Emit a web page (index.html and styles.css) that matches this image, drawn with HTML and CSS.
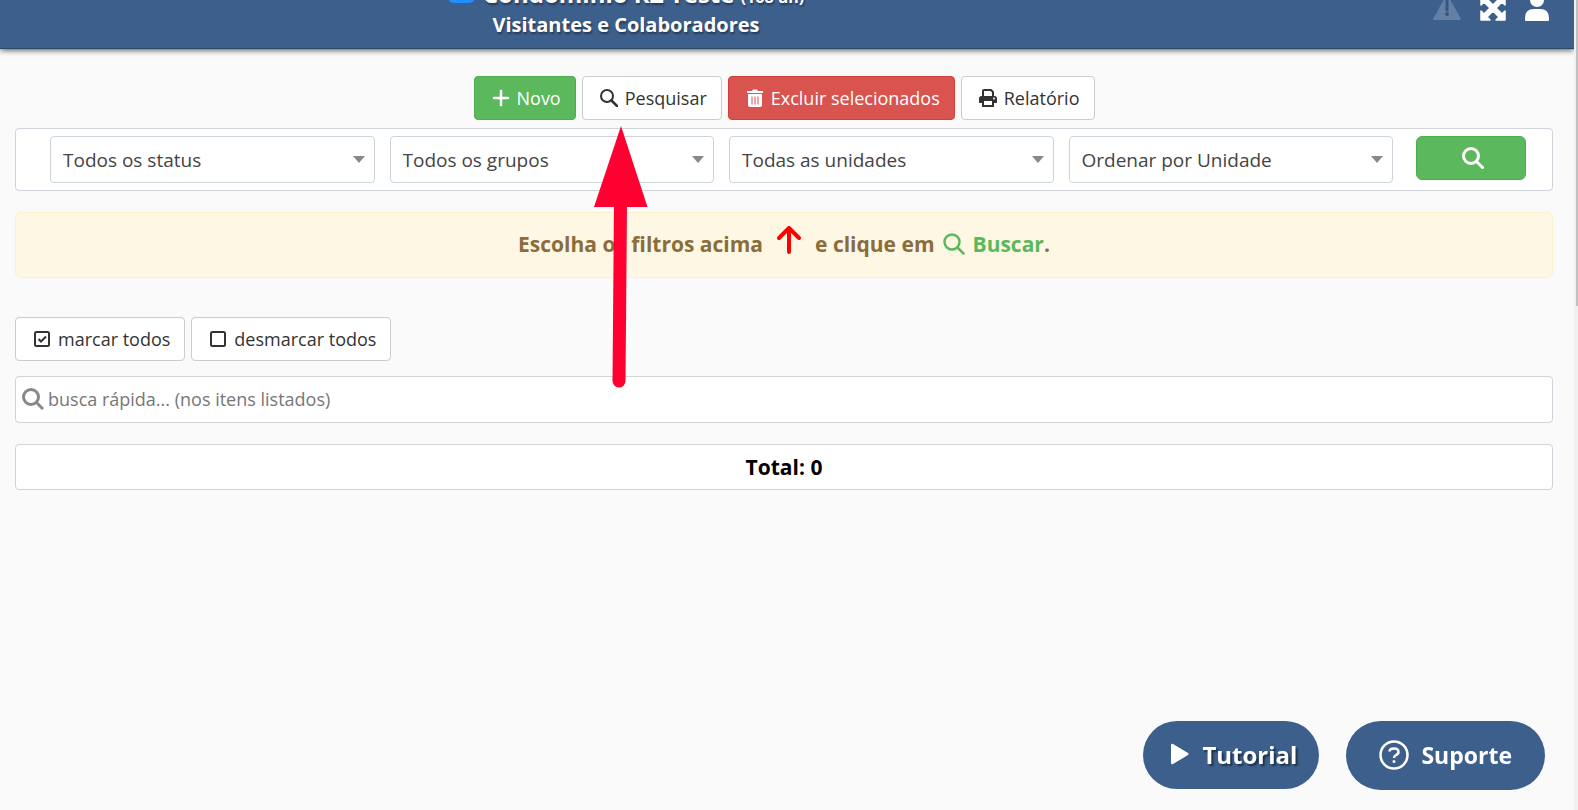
FILE: index.html
```
<!DOCTYPE html>
<html lang="pt-BR">
<head>
    <meta charset="UTF-8">
    <meta name="viewport" content="width=device-width, initial-scale=1.0">
    <title>Visitantes e Colaboradores</title>
    <link rel="stylesheet" href="styles.css">
</head>
<body>
    <!-- Header -->
    <header class="topbar">
        <div class="topbar-title">
            <h1><span class="badge"></span>Condomínio RZ Teste <small>(168 un)</small></h1>
            <h2>Visitantes e Colaboradores</h2>
        </div>
        <nav class="topbar-icons">
            <button class="icon-btn faded" aria-label="Alertas">
                <svg width="30" height="28" viewBox="0 0 30 28"><path d="M15 1 L29 26 Q29 27 28 27 H2 Q1 27 1 26 Z" fill="#fff"/><path d="M15 7v10" stroke="#1c3554" stroke-width="3" stroke-linecap="round"/><circle cx="15" cy="21" r="2" fill="#1c3554"/></svg>
            </button>
            <button class="icon-btn" aria-label="Tela cheia">
                <svg width="26" height="26" viewBox="0 0 26 26" fill="#fff"><path d="M1 1h9l-3 3 6 6 6-6-3-3h9v9l-3-3-6 6 6 6 3-3v9h-9l3-3-6-6-6 6 3 3H1v-9l3 3 6-6-6-6-3 3z" stroke="#fff" stroke-width="1.5" stroke-linejoin="round"/></svg>
            </button>
            <button class="icon-btn" aria-label="Usuário">
                <svg width="26" height="28" viewBox="0 0 26 28" fill="#fff"><circle cx="13" cy="7" r="7"/><path d="M1 27v-2q0-9 9-9h6q9 0 9 9v2q0 1-1 1H2q-1 0-1-1z"/></svg>
            </button>
        </nav>
    </header>

    <!-- Content -->
    <main class="content">
        <div class="toolbar">
            <button class="btn btn-green">
                <svg class="icon" viewBox="0 0 18 18"><path d="M9 2v14M2 9h14" stroke="currentColor" stroke-width="2.5" stroke-linecap="round"/></svg>Novo
            </button>
            <button class="btn">
                <svg class="icon" viewBox="0 0 18 18" fill="none" stroke="currentColor"><circle cx="7" cy="7" r="6" stroke-width="2"/><path d="M11.5 11.5l5.500 5.500" stroke-width="2.5" stroke-linecap="round"/></svg>Pesquisar
            </button>
            <button class="btn btn-red">
                <svg class="icon" viewBox="0 0 18 18"><path d="M1 2h5l1-1.500h4L12 2h5v2H1z" fill="currentColor"/><path d="M2 5h14v11q0 2-2 2H4q-2 0-2-2z" fill="currentColor"/><path d="M6 7.500v8M9 7.500v8M12 7.500v8" stroke="#d9534f" stroke-width="1"/></svg>Excluir selecionados
            </button>
            <button class="btn">
                <svg class="icon" viewBox="0 0 18 18"><path d="M4 7V2q0-1 1-1h7l2 2v4" fill="none" stroke="currentColor" stroke-width="2"/><path d="M2.500 7h13q2.500 0 2.500 2.500v4q0 .5-.5.5H15v-2H3v2H.5q-.5 0-.5-.5v-4Q0 7 2.500 7z" fill="currentColor"/><path d="M4 12v5h10v-5" fill="none" stroke="currentColor" stroke-width="2"/><circle cx="15" cy="9.500" r="1" fill="#fff"/></svg>Relatório
            </button>
        </div>

        <!-- Filters -->
        <form class="filters" onsubmit="return false">
            <select aria-label="Status"><option>Todos os status</option></select>
            <select aria-label="Grupo"><option>Todos os grupos</option></select>
            <select aria-label="Unidade"><option>Todas as unidades</option></select>
            <select aria-label="Ordem"><option>Ordenar por Unidade</option></select>
            <button class="btn btn-green btn-search" aria-label="Buscar">
                <svg class="icon-lg" viewBox="0 0 22 22" fill="none" stroke="currentColor" stroke-width="3"><circle cx="9" cy="9" r="7.500"/><path d="M14.500 14.500l6 6" stroke-linecap="round"/></svg>
            </button>
        </form>

        <div class="alert">
            <span>Escolha os filtros acima</span>
            <svg class="arrow-up" width="24" height="28" viewBox="0 0 24 28" fill="none" stroke="#f00" stroke-width="4" stroke-linecap="round" stroke-linejoin="round"><path d="M12 26V2M2 12L12 2l10 10"/></svg>
            <span>e clique em</span>
            <svg class="icon-lg green" viewBox="0 0 22 22" fill="none" stroke="currentColor" stroke-width="2.5"><circle cx="9" cy="9" r="7.500"/><path d="M14.500 14.500l6 6" stroke-linecap="round"/></svg>
            <span><span class="green">Buscar</span>.</span>
        </div>

        <div class="mark-buttons">
            <button class="btn">
                <svg class="icon" viewBox="0 0 18 18" fill="none" stroke="currentColor" stroke-width="2"><rect x="2" y="2" width="14" height="14" rx="1.5"/><path d="M5.500 9l2.500 2.500 5-5"/></svg>marcar todos
            </button>
            <button class="btn">
                <svg class="icon" viewBox="0 0 18 18" fill="none" stroke="currentColor" stroke-width="2"><rect x="2" y="2" width="14" height="14" rx="1.5"/></svg>desmarcar todos
            </button>
        </div>

        <label class="quick-search">
            <svg class="icon-lg" viewBox="0 0 22 22" fill="none" stroke="#888" stroke-width="3"><circle cx="9" cy="9" r="7.500"/><path d="M14.500 14.500l6.500 6.500"/></svg>
            <input type="text" placeholder="busca rápida... (nos itens listados)" aria-label="Busca rápida">
        </label>

        <div class="total">Total: 0</div>
    </main>

    <!-- Help buttons -->
    <div class="help">
        <button class="pill pill-tutorial">
            <svg width="20" height="24" viewBox="0 0 20 24"><path d="M1 3q0-2 2-1l15 9q1.500 1 0 2L3 22q-2 1-2-1z" fill="#fff"/></svg>Tutorial
        </button>
        <button class="pill">
            <svg width="30" height="30" viewBox="0 0 30 30" fill="none" stroke="#fff"><circle cx="15" cy="15" r="13.500" stroke-width="2.500"/><path d="M10.500 11.500q0-3 4.500-3t4.500 3.500q0 2-2.500 3-2 1-2 3" stroke-width="2.500"/><circle cx="15" cy="21.500" r="1.500" fill="#fff" stroke="none"/></svg>Suporte
        </button>
    </div>

    <!-- Page scroll track -->
    <div class="scroll-track"><div class="scroll-thumb"></div></div>

    <!-- Pointer to the search button -->
    <svg class="pointer" width="56" height="262" viewBox="0 0 56 262"><path d="M28 0L54.500 81H1z" fill="#ff0030"/><path d="M27.500 78L26 255" stroke="#ff0030" stroke-width="13" stroke-linecap="round"/></svg>
</body>
</html>
```
FILE: styles.css
```
* {
    box-sizing: border-box;
}

body {
    margin: 0;
    padding-right: 4px;
    min-height: 100vh;
    background: #fafafa;
    color: #333;
    font-family: "Open Sans", sans-serif;
    font-size: 18px;
}

button,
select,
input {
    font-family: inherit;
    font-size: inherit;
    color: inherit;
}

button {
    cursor: pointer;
}

/* Header */
.topbar {
    position: relative;
    display: flex;
    justify-content: center;
    align-items: flex-end;
    height: 49px;
    padding: 0 322px 9px 0;
    overflow: hidden;
    background: #3d5f8c;
    border-bottom: 1px solid #2a4a70;
    box-shadow: 0 1px 6px rgba(0, 0, 0, 0.7);
    color: #fff;
    text-shadow: 1px 2px 2px rgba(0, 0, 0, 0.4);
}

.topbar-title {
    text-align: center;
}

.topbar h1,
.topbar h2 {
    margin: 0;
    font-size: 20px;
    line-height: 28px;
    white-space: nowrap;
}

.topbar h1 {
    font-size: 24px;
}

.topbar small {
    font-size: 16px;
}

.badge {
    display: inline-block;
    width: 27px;
    height: 16px;
    margin-right: 8px;
    border-radius: 6px;
    background: #1e90ff;
    vertical-align: baseline;
}

.topbar-icons {
    position: absolute;
    right: 24px;
    bottom: 27px;
    display: flex;
    align-items: flex-end;
    gap: 18px;
}

.icon-btn {
    display: block;
    padding: 0;
    border: none;
    background: none;
}

.icon-btn svg {
    display: block;
}

.faded {
    opacity: 0.2;
}

.content {
    padding: 27px 21px 0 15px;
}

/* Buttons */
.toolbar,
.mark-buttons {
    display: flex;
    gap: 6px;
}

.toolbar {
    justify-content: center;
}

.btn {
    display: inline-flex;
    align-items: center;
    justify-content: center;
    gap: 7px;
    height: 44px;
    padding: 0 14px 1px 17px;
    background: #fff;
    border: 1px solid #ccc;
    border-radius: 4px;
}

.btn-green {
    background: #5cb85c;
    border-color: #4cae4c;
    color: #fff;
}

.btn-red {
    background: #d9534f;
    border-color: #d43f3a;
    color: #fff;
}

.icon {
    width: 18px;
    height: 18px;
}

.icon-lg {
    width: 22px;
    height: 22px;
}

/* Filters */
.filters {
    display: flex;
    align-items: flex-start;
    gap: 15px;
    margin-top: 8px;
    padding: 7px 26px 7px 34px;
    background: #fff;
    border: 1px solid #ced4da;
    border-radius: 4px;
}

.filters select {
    flex: 1;
    min-width: 0;
    height: 47px;
    padding: 0 12px;
    appearance: none;
    background: url('data:image/svg+xml,<svg xmlns="http://www.w3.org/2000/svg" width="12" height="7"><path d="M0 0h12L6 7z" fill="%23888"/></svg>') right 9px center no-repeat #fff;
    border: 1px solid #ced4da;
    border-radius: 4px;
    color: #444;
    font-size: 19px;
}

.btn-search {
    width: 110px;
    margin-left: 8px;
    border-radius: 6px;
}

.alert {
    display: flex;
    align-items: center;
    justify-content: center;
    gap: 8px;
    height: 66px;
    margin-top: 21px;
    padding-bottom: 2px;
    background: #fdf7e3;
    border: 1px solid #faf0cc;
    border-radius: 6px;
    color: #8a6d3b;
    font-size: 21px;
    font-weight: bold;
}

.arrow-up {
    margin: 0 6px 8px;
}

.green {
    color: #5cb85c;
}

.mark-buttons {
    margin-top: 39px;
}

.quick-search {
    display: flex;
    align-items: center;
    gap: 4px;
    height: 47px;
    margin-top: 15px;
    padding: 0 6px 1px;
    background: #fff;
    border: 1px solid #ced4da;
    border-radius: 4px;
}

.quick-search input {
    flex: 1;
    padding: 0;
    border: none;
    outline: none;
    background: none;
}

.quick-search input::placeholder {
    color: #777;
}

.total {
    margin-top: 21px;
    background: #fff;
    border: 1px solid #ced4da;
    border-radius: 4px;
    color: #000;
    font-size: 21px;
    font-weight: bold;
    line-height: 44px;
    text-align: center;
}

/* Help buttons */
.help {
    position: fixed;
    right: 33px;
    bottom: 20px;
    display: flex;
    align-items: flex-start;
    gap: 27px;
}

.pill {
    display: flex;
    align-items: center;
    gap: 12px;
    height: 69px;
    padding: 0 33px 2px;
    background: #3d5f8c;
    border: none;
    border-radius: 35px;
    color: #fff;
    font-size: 23px;
    font-weight: bold;
}

.pill-tutorial {
    height: 68px;
    padding: 0 22px 2px 27px;
    font-size: 24px;
    text-shadow: 2px 2px 2px rgba(0, 0, 0, 0.5);
}

.scroll-track {
    position: fixed;
    top: 0;
    right: 0;
    bottom: 0;
    width: 4px;
    padding-left: 2px;
    background: #f0f0f0;
}

.scroll-thumb {
    height: 306px;
    background: #c1c1c1;
}

.pointer {
    position: absolute;
    top: 126px;
    left: 593px;
}
```
